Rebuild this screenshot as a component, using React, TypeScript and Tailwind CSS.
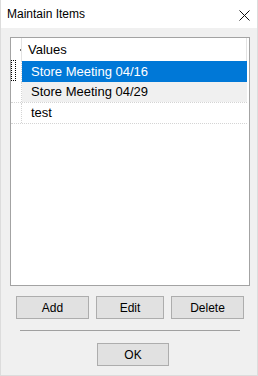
import React from "react";

const rows = [
  { label: "Store Meeting 04/16", selected: true, alt: false },
  { label: "Store Meeting 04/29", selected: false, alt: true },
  { label: "test", selected: false, alt: false },
];

const Btn = ({ label, w }: { label: string; w: string }) => (
  <button
    className={`${w} h-[23px] bg-[#e1e1e1] border border-[#adadad] text-[12px] text-black flex items-center justify-center`}
  >
    {label}
  </button>
);

const App = () => {
  return (
    <div className="w-[258px] h-[376px] flex flex-col bg-white font-['Liberation_Sans',Arial,sans-serif] text-black">
      {/* title bar */}
      <div className="h-[28px] flex items-center justify-between pl-[6px] pr-[7px] bg-white border-x border-[#dcdcdc]">
        <span className="text-[12px]">Maintain Items</span>
        <svg width="11" height="11" viewBox="0 0 11 11" className="mt-[2px]">
          <path d="M0.5 0.5 L10.5 10.5 M10.5 0.5 L0.5 10.5" stroke="#111" strokeWidth="1" />
        </svg>
      </div>

      {/* body */}
      <div className="flex-1 flex flex-col bg-[#f0f0f0] border-x border-b border-[#dcdcdc] pl-[9px] pt-[9px]">
        {/* list box */}
        <div className="w-[240px] h-[249px] border border-[#a3a3a3] bg-white flex flex-col">
          {/* header */}
          <div className="h-[23px] flex shrink-0">
            <div className="w-[10px] relative">
              <div className="absolute left-[9px] top-[11px] w-px h-[2px] bg-[#777]" />
            </div>
            <div className="w-px bg-[#e3e3e3]" />
            <div className="w-[224px] flex items-center pl-[6px] text-[13px] pt-[1px]">Values</div>
            <div className="w-px bg-[#e3e3e3]" />
          </div>
          {/* rows */}
          {rows.map((r) => (
            <div
              key={r.label}
              className={`h-[21px] flex shrink-0 w-[236px] ${
                r.selected ? "" : "border-b border-dotted border-[#d4d4d4]"
              }`}
            >
              <div className="w-[10px] flex">
                {r.selected && <div className="w-[5px] h-[21px] -mt-px border border-dotted border-black" />}
              </div>
              <div className="w-px border-l border-dotted border-[#d4d4d4]" />
              <div
                className={`w-[225px] flex items-center pl-[9px] text-[13px] ${
                  r.selected ? "bg-[#0078d7] text-white" : r.alt ? "bg-[#f0f0f0]" : ""
                }`}
              >
                {r.label}
              </div>
            </div>
          ))}
        </div>

        {/* buttons */}
        <div className="flex gap-[7px] ml-[6px] mt-[10px]">
          <Btn label="Add" w="w-[73px]" />
          <Btn label="Edit" w="w-[68px]" />
          <Btn label="Delete" w="w-[73px]" />
        </div>

        <div className="w-[220px] h-px bg-[#a0a0a0] ml-[10px] mt-[11px]" />

        <div className="ml-[87px] mt-[12px]">
          <Btn label="OK" w="w-[72px]" />
        </div>
      </div>
    </div>
  );
};

export default App;
